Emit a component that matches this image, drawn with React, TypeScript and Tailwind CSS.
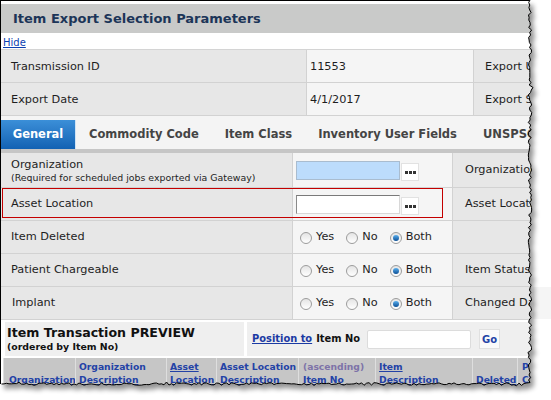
import React from 'react'

function rng(seed: number) {
  let s = seed
  return () => {
    s = (s * 9301 + 49297) % 233280
    return s / 233280
  }
}

function tearPaths() {
  const r = rng(7)
  const right: string[] = []
  for (let y = 0; y <= 384; y += 2.5) {
    const x = 530 + (r() - 0.5) * 3.5 + (r() > 0.85 ? (r() - 0.5) * 4 : 0)
    right.push(`${x.toFixed(1)},${y.toFixed(1)}`)
  }
  const bottom: string[] = []
  for (let x = 529; x >= 0; x -= 2.5) {
    const y = 384 + (r() - 0.5) * 2.6 + (r() > 0.85 ? (r() - 0.5) * 2.5 : 0)
    bottom.push(`${x.toFixed(1)},${y.toFixed(1)}`)
  }
  const edge = `M${right.join(' L')} L${bottom.join(' L')}`
  const page = `M0,0 L${right.join(' L')} L${bottom.join(' L')} L0,384 Z`
  return { edge, page }
}

function Radio({ checked }: { checked?: boolean }) {
  return (
    <span className="inline-flex h-[12px] w-[12px] shrink-0 items-center justify-center rounded-full border border-[#9c9c9c] bg-linear-to-b from-[#e4e4e4] to-white">
      {checked && <span className="h-[6px] w-[6px] rounded-full bg-linear-to-b from-[#5ab0ee] to-[#0a4f95]" />}
    </span>
  )
}

function YesNoBoth() {
  return (
    <div className="flex items-center pl-[7px] pt-[1px] text-[11.3px] text-[#1e1e1e]">
      <Radio />
      <span className="ml-[4px]">Yes</span>
      <span className="ml-[12px] flex"><Radio /></span>
      <span className="ml-[4px]">No</span>
      <span className="ml-[12px] flex"><Radio checked /></span>
      <span className="ml-[4px]">Both</span>
    </div>
  )
}

function Lookup({ active }: { active?: boolean }) {
  return (
    <div className="flex items-center pl-[3px]">
      <div
        className={
          active
            ? 'h-[19px] w-[104px] border border-[#a9bccf] bg-[#bcdcfc]'
            : 'h-[19px] w-[104px] border border-[#d8d8d8] border-t-[#7a7a7a] border-l-[#8a8a8a] bg-white'
        }
      />
      <div className="ml-[1px] mt-[3px] flex h-[18px] w-[18px] items-end justify-center gap-[1px] border border-[#e2e2e2] bg-white pb-[6px]">
        <span className="h-[3px] w-[3px] bg-[#333]" />
        <span className="h-[3px] w-[3px] bg-[#333]" />
        <span className="h-[3px] w-[3px] bg-[#333]" />
      </div>
    </div>
  )
}

function FormRow({
  h,
  label,
  mid,
  right,
  children,
}: {
  h: string
  label: React.ReactNode
  mid?: React.ReactNode
  right?: string
  children?: React.ReactNode
}) {
  return (
    <div className={`relative flex border-b border-[#d2d2d2] ${h}`}>
      <div className="flex w-[292px] shrink-0 flex-col justify-center border-r border-[#d2d2d2] bg-[#e7e7e7] pl-[10px] pt-[1px]">{label}</div>
      <div className="flex w-[160px] shrink-0 items-center border-r border-[#d2d2d2] bg-[#f5f5f5]">{mid}</div>
      <div className="flex min-w-0 flex-1 items-center overflow-hidden whitespace-nowrap bg-[#e7e7e7] pl-[12px] text-[11.3px] text-[#1e1e1e]">{right}</div>
      {children}
    </div>
  )
}

function HeadCell({ w, children, pl = 'pl-[3px]' }: { w: string; children: React.ReactNode; pl?: string }) {
  return (
    <div className={`flex shrink-0 flex-col justify-end overflow-hidden whitespace-nowrap border-l border-[#dedede] pb-[2px] leading-[13px] ${w} ${pl}`}>{children}</div>
  )
}

export default function App() {
  const { edge, page } = tearPaths()
  const tabs = ['Commodity Code', 'Item Class', 'Inventory User Fields', 'UNSPSC']
  return (
    <div className="relative h-[400px] w-[551px] overflow-hidden bg-white font-['DejaVu_Sans',Verdana,sans-serif]">
      <div className="flex w-[548px] flex-col border-l border-t border-black">
        {/* title */}
        <div className="mt-[3px] flex h-[29px] items-center bg-[#c9cac9] pl-[12px] pt-[1px]">
          <span className="text-[13px] font-bold text-[#1c3558]">Item Export Selection Parameters</span>
        </div>
        <div className="flex h-[16px] items-center pl-[2px] pt-[3px]">
          <span className="text-[10px] text-[#0b3fb0] underline">Hide</span>
        </div>

        {/* header info */}
        <div className="border-t border-[#d4d4d4]">
          {[
            ['Transmission ID', '11553', 'Export User'],
            ['Export Date', '4/1/2017', 'Export Status'],
          ].map(([a, b, c]) => (
            <div key={a} className="flex h-[33px] border-b border-[#d2d2d2] pt-[2px] text-[11.3px] text-[#1e1e1e]">
              <div className="-mt-[2px] flex w-[306px] shrink-0 items-center border-r border-[#d2d2d2] bg-[#e7e7e7] pl-[10px] pt-[2px]">{a}</div>
              <div className="-mt-[2px] flex w-[167px] shrink-0 items-center border-r border-[#d2d2d2] bg-[#f5f5f5] pl-[3px] pt-[2px]">{b}</div>
              <div className="-mt-[2px] flex min-w-0 flex-1 items-center overflow-hidden whitespace-nowrap bg-[#e7e7e7] pl-[11px] pt-[2px]">{c}</div>
            </div>
          ))}
        </div>

        {/* tabs */}
        <div className="flex h-[33px] items-end overflow-hidden bg-[#f4f4f4]">
          <div className="flex h-[29px] w-[75px] shrink-0 items-center justify-center border-r border-[#cfe3f5] bg-linear-to-b from-[#3b8fd8] to-[#1262b3] pt-[1px] text-[11.5px] font-bold text-white">
            General
          </div>
          {tabs.map((t) => (
            <div key={t} className="flex h-[29px] shrink-0 items-center whitespace-nowrap px-[13px] pt-[1px] text-[11.5px] font-bold text-[#444]">
              {t}
            </div>
          ))}
        </div>
        <div className="h-[4px] bg-[#c6c6c6]" />

        {/* form rows */}
        <FormRow
          h="h-[35px]"
          label={
            <>
              <span className="text-[11.3px] leading-[15px] text-[#1e1e1e]">Organization</span>
              <span className="text-[9.4px] leading-[12px] text-[#1e1e1e]">(Required for scheduled jobs exported via Gateway)</span>
            </>
          }
          mid={<Lookup active />}
          right="Organization"
        />
        <FormRow h="h-[33px]" label={<span className="text-[11.3px] text-[#1e1e1e]">Asset Location</span>} mid={<Lookup />} right="Asset Location">
          <div className="absolute left-[1px] top-0 h-[30px] w-[441px] border border-[#c40000]" />
        </FormRow>
        <FormRow h="h-[33px]" label={<span className="text-[11.3px] text-[#1e1e1e]">Item Deleted</span>} mid={<YesNoBoth />} />
        <FormRow h="h-[33px]" label={<span className="text-[11.3px] text-[#1e1e1e]">Patient Chargeable</span>} mid={<YesNoBoth />} right="Item Status" />
        <FormRow h="h-[33px]" label={<span className="pl-[1px] text-[11.3px] text-[#1e1e1e]">Implant</span>} mid={<YesNoBoth />} right="Changed Date" />

        {/* preview */}
        <div className="mt-[2px] flex h-[34px] pl-[4px]">
          <div className="flex w-[239px] shrink-0 flex-col justify-center bg-[#efefef] pl-[2px]">
            <span className="text-[12.6px] font-bold leading-[16px] text-[#111]">Item Transaction PREVIEW</span>
            <span className="text-[9.4px] font-bold leading-[12px] text-[#111]">(ordered by Item No)</span>
          </div>
          <div className="ml-[3px] flex min-w-0 flex-1 items-center bg-[#efefef] pl-[5px]">
            <span className="whitespace-nowrap text-[9.9px] font-bold text-[#1b3aa3] underline">Position to</span>
            <span className="ml-[4px] whitespace-nowrap text-[9.9px] font-bold text-[#111]">Item No</span>
            <div className="ml-[7px] h-[19px] w-[104px] shrink-0 rounded-[2px] border border-[#dcdcdc] bg-white" />
            <div className="ml-[8px] flex h-[20px] w-[21px] shrink-0 items-center justify-center border border-[#e0e0e0] bg-[#fafafa] text-[10px] font-bold text-[#2342a6]">
              Go
            </div>
          </div>
        </div>

        {/* grid header */}
        <div className="mt-[2px] ml-[2px] flex h-[30px] overflow-hidden bg-[#c6c6c6] text-[9.2px] font-bold text-[#2342a6]">
          <HeadCell w="w-[72px]" pl="pl-[5px]">
            <span className="underline">Organization</span>
          </HeadCell>
          <HeadCell w="w-[91px]">
            <span>Organization</span>
            <span className="underline">Description</span>
          </HeadCell>
          <HeadCell w="w-[50px]">
            <span className="underline">Asset</span>
            <span className="underline">Location</span>
          </HeadCell>
          <HeadCell w="w-[82px]">
            <span>Asset Location</span>
            <span className="underline">Description</span>
          </HeadCell>
          <HeadCell w="w-[77px]" pl="pl-[4px]">
            <span className="text-[#7d73a8]">(ascending)</span>
            <span className="underline">Item No</span>
          </HeadCell>
          <HeadCell w="w-[97px]">
            <span className="underline">Item</span>
            <span className="underline">Description</span>
          </HeadCell>
          <HeadCell w="w-[45px]">
            <span className="underline">Deleted</span>
          </HeadCell>
          <HeadCell w="w-[40px]" pl="pl-[4px]">
            <span>Patient</span>
            <span>Chargeable</span>
          </HeadCell>
        </div>
      </div>

      {/* torn edge overlay */}
      <svg className="pointer-events-none absolute inset-0" width="551" height="400" viewBox="0 0 551 400">
        <defs>
          <mask id="outside">
            <rect x="0" y="0" width="551" height="400" fill="white" />
            <path d={page} fill="black" />
          </mask>
          <filter id="blur" x="-10%" y="-10%" width="120%" height="120%">
            <feGaussianBlur stdDeviation="2.6" />
          </filter>
        </defs>
        <g mask="url(#outside)">
          <rect x="0" y="0" width="551" height="400" fill="white" />
          <rect x="533" y="287" width="18" height="32" fill="#f5f5f5" />
          <path d={page} transform="translate(4,5)" fill="#000" opacity="0.42" filter="url(#blur)" />
        </g>
        <path d={edge} fill="none" stroke="#000" strokeWidth="1" />
      </svg>
    </div>
  )
}
